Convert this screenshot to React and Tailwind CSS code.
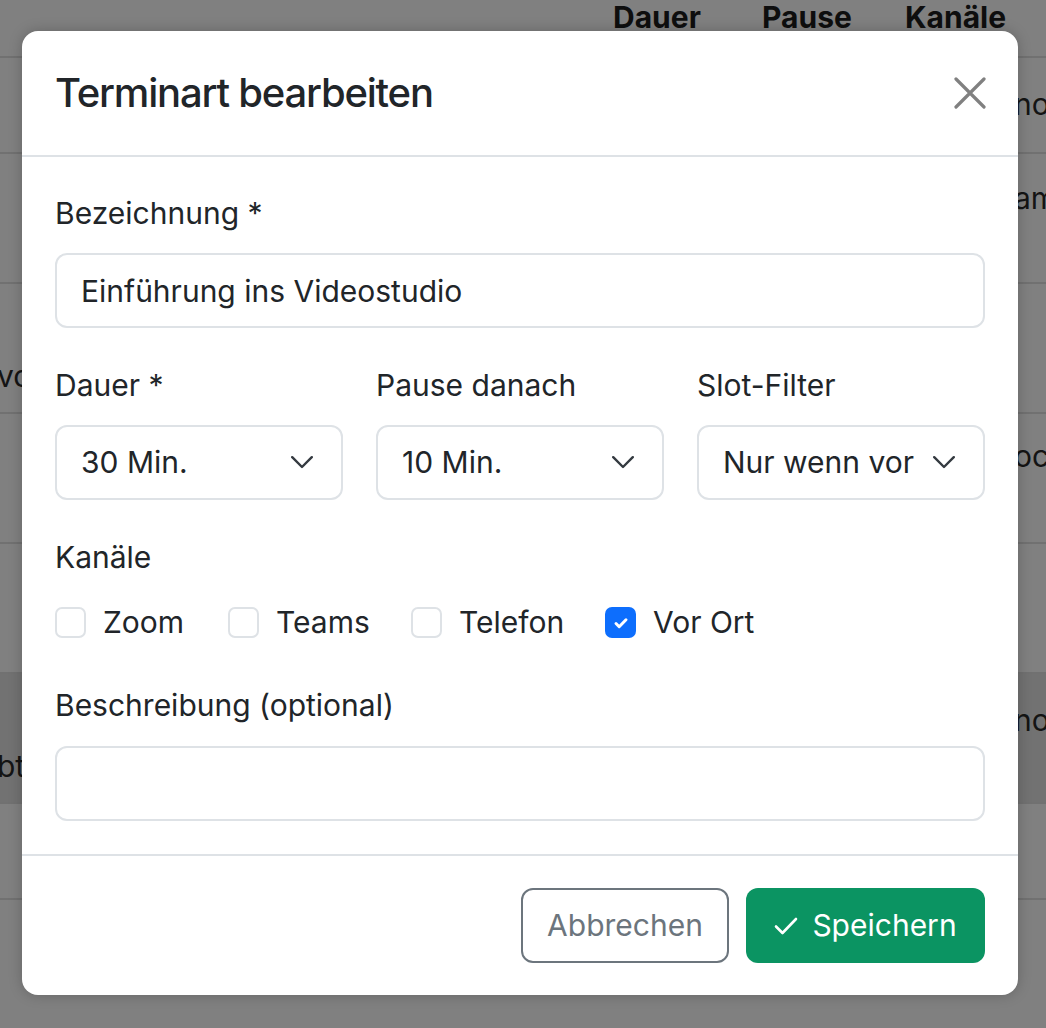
import React from "react";

const font = { fontFamily: "Inter, 'Noto Sans', sans-serif" };

function Chevron() {
  return (
    <svg width="22" height="13" viewBox="0 0 22 13" className="shrink-0">
      <path d="M1.2 1.2L11 11L20.8 1.2" fill="none" stroke="#343a40" strokeWidth="2.4" strokeLinecap="round" strokeLinejoin="round" />
    </svg>
  );
}

function Select({ value }) {
  return (
    <div className="h-[75px] rounded-[12px] border-2 border-[#dee2e6] bg-white flex items-center pl-[24px] pr-[28px]">
      <div className="flex-1 overflow-hidden whitespace-nowrap text-[30px] text-[#212529] mr-[19px]">{value}</div>
      <Chevron />
    </div>
  );
}

function Check({ label, checked, w }) {
  return (
    <div className="flex items-center" style={{ width: w }}>
      {checked ? (
        <div className="w-[31px] h-[31px] rounded-[7px] bg-[#0d6efd] flex items-center justify-center">
          <svg width="20" height="20" viewBox="0 0 20 20">
            <path d="M5 10.5l3.2 3.2L15 6.8" fill="none" stroke="#fff" strokeWidth="3" strokeLinecap="round" strokeLinejoin="round" />
          </svg>
        </div>
      ) : (
        <div className="w-[31px] h-[31px] rounded-[7px] border-2 border-[#dee2e6] bg-white" />
      )}
      <span className="ml-[17px] text-[30px] leading-[45px] text-[#212529]">{label}</span>
    </div>
  );
}

function BgRow({ h, dark, left, right, leftTop, rightTop }) {
  return (
    <div className={`relative flex justify-between border-b-2 border-[#717171] ${dark ? "bg-[#727272]" : ""}`} style={{ height: h }}>
      <div className="text-[30px] leading-[36px] text-[#141414] whitespace-nowrap -ml-[3px]" style={{ marginTop: leftTop || 0 }}>{left}</div>
      <div className="text-[30px] leading-[36px] text-[#141414] whitespace-nowrap w-[32px] overflow-hidden" style={{ marginTop: rightTop || 0 }}>{right}</div>
    </div>
  );
}

export default function App() {
  return (
    <div className="relative w-[1046px] h-[1028px] overflow-hidden bg-[#808080]" style={font}>
      {/* background table dimmed by backdrop */}
      <div className="flex flex-col">
        <div className="h-[58px] border-b-2 border-[#717171] flex pl-[613px] text-[30px] leading-[36px] font-bold text-[#0e0e0e]">
          <span className="w-[149px] -mt-[1px]">Dauer</span>
          <span className="w-[143px] -mt-[1px]">Pause</span>
          <span className="-mt-[1px]">Kanäle</span>
        </div>
        <BgRow h={96} left="" right="nor" rightTop={28} />
        <BgRow h={130} left="" right="am" rightTop={26} />
        <BgRow h={130} left="vor" right="" leftTop={74} />
        <BgRow h={130} left="" right="oca" rightTop={24} />
        <BgRow h={130} left="" right="" />
        <BgRow h={130} dark left="bt" right="nor" leftTop={74} rightTop={28} />
        <BgRow h={96} left="" right="" />
      </div>

      {/* modal */}
      <div className="absolute left-[22px] top-[31px] w-[996px] h-[964px] bg-white rounded-[16px] shadow-[0_0_14px_rgba(0,0,0,0.22)] flex flex-col overflow-hidden">
        <div className="h-[126px] border-b-2 border-[#dee2e6] flex items-center justify-between pl-[33px] pr-[32px] shrink-0">
          <h5 className="text-[40px] font-medium tracking-[-1.2px] text-[#212529] leading-[48px]">Terminart bearbeiten</h5>
          <svg width="32" height="32" viewBox="0 0 32 32">
            <path d="M2 2L30 30M30 2L2 30" stroke="#808080" strokeWidth="3.2" strokeLinecap="round" />
          </svg>
        </div>

        <div className="px-[33px] pt-[34px] pb-[33px] flex flex-col">
          <label className="text-[30px] leading-[45px] text-[#212529] mb-[17px]">Bezeichnung *</label>
          <div className="h-[75px] rounded-[12px] border-2 border-[#dee2e6] flex items-center px-[24px] pt-[2px] text-[30px] text-[#212529]">
            Einführung ins Videostudio
          </div>

          <div className="grid grid-cols-3 gap-[33px] mt-[35px]">
            <div className="flex flex-col">
              <label className="text-[30px] leading-[45px] text-[#212529] mb-[17px]">Dauer *</label>
              <Select value="30 Min." />
            </div>
            <div className="flex flex-col">
              <label className="text-[30px] leading-[45px] text-[#212529] mb-[17px]">Pause danach</label>
              <Select value="10 Min." />
            </div>
            <div className="flex flex-col">
              <label className="text-[30px] leading-[45px] text-[#212529] mb-[17px]">Slot-Filter</label>
              <Select value="Nur wenn vorhanden" />
            </div>
          </div>

          <label className="text-[30px] leading-[45px] text-[#212529] mt-[35px] mb-[20px]">Kanäle</label>
          <div className="flex items-center">
            <Check label="Zoom" w={173} />
            <Check label="Teams" w={183} />
            <Check label="Telefon" w={194} />
            <Check label="Vor Ort" checked />
          </div>

          <label className="text-[30px] leading-[45px] text-[#212529] mt-[38px] mb-[18px]">Beschreibung (optional)</label>
          <div className="h-[75px] rounded-[12px] border-2 border-[#dee2e6]" />
        </div>

        <div className="border-t-2 border-[#dee2e6] flex-1 flex items-center justify-end gap-[17px] pr-[33px]">
          <button className="h-[75px] w-[208px] rounded-[12px] border-2 border-[#6c757d] text-[30px] text-[#6c757d] bg-white">
            Abbrechen
          </button>
          <button className="h-[75px] w-[239px] rounded-[12px] bg-[#0b9462] text-[30px] text-white flex items-center justify-center gap-[14px]">
            <svg width="24" height="24" viewBox="0 0 24 24">
              <path d="M2 12.5l6.5 6.5L22 5" fill="none" stroke="#fff" strokeWidth="2.6" strokeLinecap="round" strokeLinejoin="round" />
            </svg>
            <span>Speichern</span>
          </button>
        </div>
      </div>
    </div>
  );
}
